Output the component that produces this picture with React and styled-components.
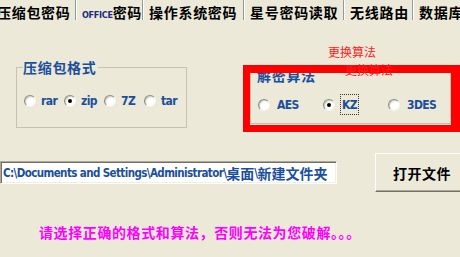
import React from 'react';
import styled, { createGlobalStyle } from 'styled-components';

const CJK = `"Noto Sans CJK SC", "Noto Sans", sans-serif`;
const NARROW = `"Liberation Sans Narrow", "DejaVu Sans Condensed", "Noto Sans CJK SC", sans-serif`;
const BLUE = '#1B4F9C';

const Global = createGlobalStyle`
  html, body { margin: 0; padding: 0; background: #ECE9D8; }
  body { font-family: ${CJK}; }
`;

const Window = styled.div`
  position: relative;
  width: 460px;
  height: 257px;
  overflow: hidden;
  background: #ECE9D8;
  font-family: ${CJK};
`;

const TabBar = styled.div`
  display: flex;
  height: 20px;
  margin-left: -9px;
`;

const Tab = styled.div`
  flex: 0 0 ${p => p.$w}px;
  box-sizing: border-box;
  height: 20px;
  padding: 5px 0 0 5px;
  border-left: 1px solid #ffffff;
  border-right: 1px solid #919b9c;
  font-size: 14px;
  line-height: 15px;
  font-weight: 700;
  letter-spacing: 0.7px;
  color: #000;
  white-space: nowrap;
`;

const TinyLatin = styled.span`
  font-family: ${NARROW};
  font-size: 9px;
  letter-spacing: -0.3px;
  color: #1a2a80;
`;

const Row = styled.div`
  display: flex;
  align-items: ${p => p.$align || 'flex-start'};
  margin-top: ${p => p.$mt || 0}px;
`;

const Group = styled.fieldset`
  box-sizing: border-box;
  flex: 0 0 ${p => p.$w}px;
  margin: ${p => p.$mt}px 0 0 ${p => p.$ml}px;
  padding: ${p => p.$pad};
  border: 1px solid #c5c2b2;
  min-width: 0;
`;

const Legend = styled.legend`
  margin-left: -1px;
  padding: ${p => p.$pt || 0}px 1px 0 0;
  font-size: 14px;
  line-height: 14px;
  font-weight: 700;
  letter-spacing: 0.7px;
  color: ${BLUE};
`;

const RadioRow = styled.div`
  display: grid;
  grid-template-columns: repeat(${p => p.$n}, ${p => p.$col}px);
  align-items: center;
`;

const RadioItem = styled.label`
  display: flex;
  align-items: center;
  gap: ${p => p.$gap}px;
`;

const Circle = styled.span`
  box-sizing: border-box;
  flex: 0 0 12px;
  width: 12px;
  height: 12px;
  border-radius: 50%;
  border: 1px solid;
  border-color: #8e8c80 #f4f3ee #f4f3ee #8e8c80;
  background: #ffffff;
  box-shadow: inset 1px 1px 1px #c9c6b8;
  display: flex;
  align-items: center;
  justify-content: center;
  &::after {
    content: '';
    width: 4px;
    height: 4px;
    border-radius: 50%;
    background: ${p => (p.$checked ? '#000' : 'transparent')};
  }
`;

const OptionText = styled.span`
  box-sizing: border-box;
  height: ${p => p.$h}px;
  display: flex;
  align-items: center;
  padding: 0 1px;
  border: 1px dotted ${p => (p.$focus ? '#3a3a2a' : 'transparent')};
  font-family: ${NARROW};
  font-size: 12px;
  font-weight: 700;
  letter-spacing: -0.6px;
  color: ${BLUE};
`;

const PathField = styled.div`
  box-sizing: border-box;
  flex: 0 0 337px;
  height: 23px;
  background: #ffffff;
  border-top: 1px solid #aca899;
  border-left: 1px solid #aca899;
  border-bottom: 1px solid #ffffff;
  border-right: 1px solid #ffffff;
  box-shadow: inset 1px 1px 0 #716f64, inset -1px -1px 0 #f1efe2;
  padding-left: 2px;
  display: flex;
  align-items: center;
  white-space: nowrap;
  overflow: hidden;
  font-weight: 700;
  color: ${BLUE};
`;

const PathLatin = styled.span`
  font-family: ${NARROW};
  font-size: 11.5px;
  letter-spacing: -0.6px;
`;

const PathCJK = styled.span`
  font-family: ${CJK};
  font-size: 14px;
`;

const Button = styled.button`
  box-sizing: border-box;
  flex: 0 0 94px;
  height: 39px;
  margin-left: 38px;
  padding: 0;
  background: #ece9d8;
  border: none;
  border-top: 1px solid #ffffff;
  border-left: 1px solid #ffffff;
  border-right: 1px solid #716f64;
  border-bottom: 1px solid #716f64;
  box-shadow: inset -1px -1px 0 #aca899;
  font-family: ${CJK};
  font-size: 14px;
  line-height: 14px;
  font-weight: 700;
  letter-spacing: 0.5px;
  color: #000;
`;

const Message = styled.div`
  margin-top: 33px;
  padding-left: 39px;
  font-size: 14px;
  line-height: 14px;
  font-weight: 700;
  letter-spacing: 0.6px;
  color: #ff00ff;
  white-space: nowrap;
`;

const Highlight = styled.div`
  position: absolute;
  left: 243px;
  top: 65px;
  width: 217px;
  height: 67px;
  box-sizing: border-box;
  border: 7px solid #ff0000;
  border-top-width: 8px;
  border-right-width: 9px;
  pointer-events: none;
`;

const Annotation = styled.div`
  position: absolute;
  left: ${p => p.$x}px;
  top: ${p => p.$y}px;
  font-family: ${CJK};
  font-size: 12px;
  line-height: 12px;
  color: #ff1a1a;
  white-space: nowrap;
  pointer-events: none;
`;

const tabs = [
  { w: 85, label: '压缩包密码' },
  { w: 66, label: <><TinyLatin>OFFICE</TinyLatin>密码</> },
  { w: 101, label: '操作系统密码' },
  { w: 100, label: '星号密码读取' },
  { w: 69, label: '无线路由' },
  { w: 70, label: '数据库' },
];

function Radio({ label, checked, focus, gap, h }) {
  return (
    <RadioItem $gap={gap}>
      <Circle $checked={checked} />
      <OptionText $focus={focus} $h={h}>{label}</OptionText>
    </RadioItem>
  );
}

export default function App() {
  return (
    <>
      <Global />
      <Window>
        <TabBar>
          {tabs.map((t, i) => (
            <Tab key={i} $w={t.w}>{t.label}</Tab>
          ))}
        </TabBar>

        <Row>
          <Group $w={171} $mt={40} $ml={16} $pad="20px 0 19px 7px">
            <Legend>压缩包格式</Legend>
            <RadioRow $n={4} $col={40}>
              <Radio label="rar" gap={3} h={14} />
              <Radio label="zip" gap={3} h={14} checked />
              <Radio label="7Z" gap={3} h={14} />
              <Radio label="tar" gap={3} h={14} />
            </RadioRow>
          </Group>
          <Group $w={201} $mt={40} $ml={63} $pad="12px 0 8px 7px">
            <Legend $pt={8}>解密算法</Legend>
            <RadioRow $n={3} $col={65}>
              <Radio label="AES" gap={5} h={21} />
              <Radio label="KZ" gap={5} h={21} checked focus />
              <Radio label="3DES" gap={5} h={21} />
            </RadioRow>
          </Group>
        </Row>

        <Row $align="center" $mt={25}>
          <PathField>
            <PathLatin>C:\Documents and Settings\Administrator\</PathLatin>
            <PathCJK>桌面</PathCJK>
            <PathLatin>\</PathLatin>
            <PathCJK>新建文件夹</PathCJK>
          </PathField>
          <Button>打开文件</Button>
        </Row>

        <Message>请选择正确的格式和算法，否则无法为您破解。。。</Message>

        <Highlight />
        <Annotation $x={328} $y={46}>更换算法</Annotation>
        <Annotation $x={345} $y={64}>更换算法</Annotation>
      </Window>
    </>
  );
}
